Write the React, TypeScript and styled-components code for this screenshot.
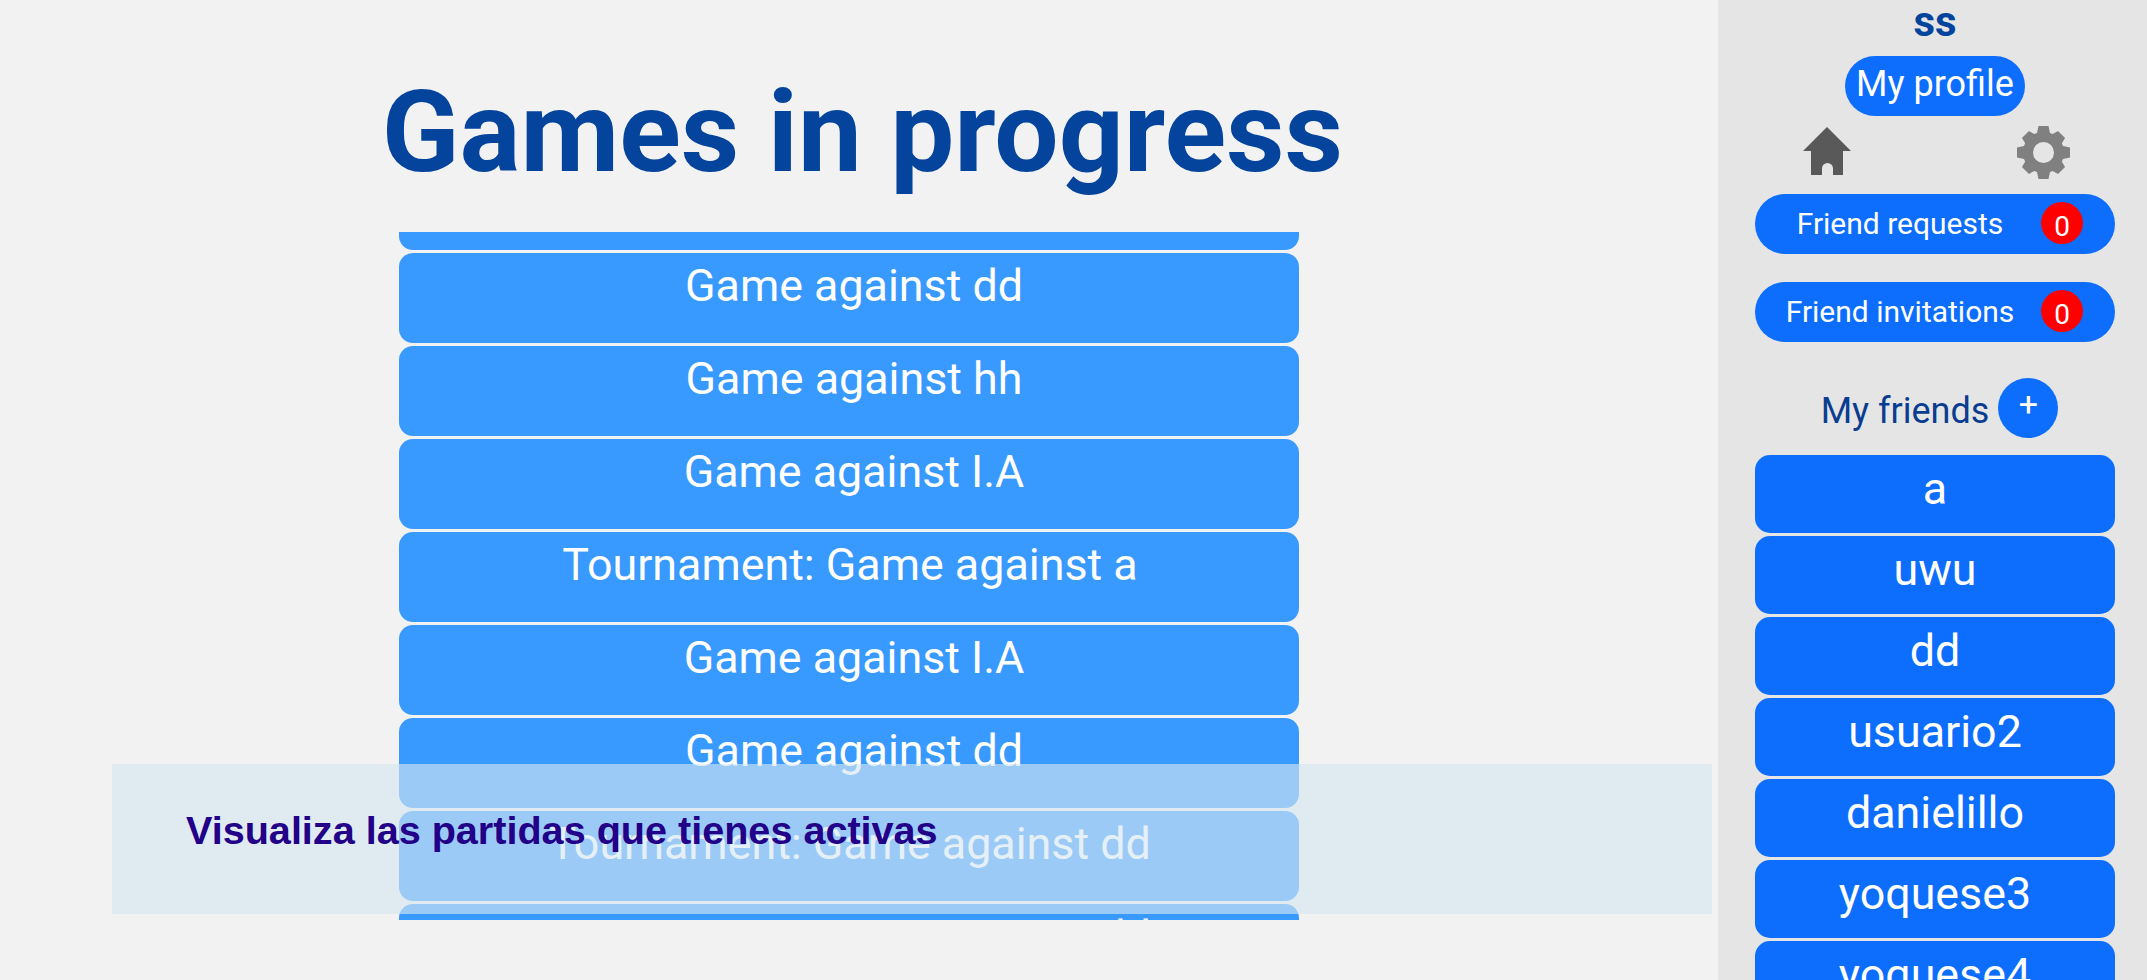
import React from "react";
import styled, { createGlobalStyle } from "styled-components";

const GlobalStyle = createGlobalStyle`
  html, body {
    margin: 0;
    padding: 0;
    height: 100%;
    overflow: hidden;
    background: #f2f2f2;
    font-family: Roboto, sans-serif;
  }
  * {
    box-sizing: border-box;
  }
`;

const Page = styled.div`
  display: grid;
  grid-template-columns: 1718px 429px;
  height: 980px;
  overflow: hidden;
`;

const Main = styled.main`
  position: relative;
  display: flex;
  flex-direction: column;
  align-items: center;
  padding-top: 65px;
`;

const Title = styled.h1`
  flex: none;
  margin: 0 0 0 7px;
  height: 167px;
  font-size: 114px;
  line-height: 134px;
  font-weight: 700;
  color: #04449c;
`;

const GameScroller = styled.div`
  flex: none;
  align-self: flex-start;
  margin-left: 399px;
  width: 900px;
  height: 688px;
  overflow: hidden;
`;

const GameList = styled.div`
  display: flex;
  flex-direction: column;
  gap: 3px;
  margin-top: -72px;
`;

const GameRow = styled.div<{ $shift: number }>`
  flex: none;
  height: 90px;
  padding-left: ${(p) => p.$shift}px;
  border-radius: 14px;
  background: #3899ff;
  color: #fff;
  font-size: 44.8px;
  line-height: 66px;
  text-align: center;
`;

const HintBanner = styled.div`
  position: absolute;
  left: 112px;
  top: 764px;
  width: 1600px;
  height: 150px;
  padding: 40px 74px;
  background: rgba(214, 231, 240, 0.63);
  color: #220088;
  font-family: "Liberation Sans", Arial, sans-serif;
  font-size: 39.6px;
  font-weight: 700;
  line-height: 52px;
`;

const Sidebar = styled.aside`
  display: flex;
  flex-direction: column;
  align-items: center;
  padding-left: 37px;
  padding-right: 32px;
  height: 980px;
  overflow: hidden;
  background: #e5e5e5;
`;

const UserName = styled.div`
  flex: none;
  height: 56px;
  font-size: 42px;
  font-weight: 700;
  line-height: 44px;
  color: #04449c;
`;

const ProfileButton = styled.button`
  flex: none;
  width: 180px;
  height: 60px;
  padding: 0 0 4px;
  border: 0;
  border-radius: 30px;
  background: #0d6efd;
  color: #fff;
  font-family: inherit;
  font-size: 36px;
  line-height: 54px;
`;

const IconRow = styled.div`
  flex: none;
  display: flex;
  justify-content: space-between;
  align-items: flex-start;
  width: 100%;
  height: 78px;
  padding: 10px 45px 0 48px;

  svg:first-child {
    margin-top: 1px;
  }
`;

const NoticeButton = styled.button`
  flex: none;
  position: relative;
  width: 100%;
  height: 60px;
  margin-bottom: 28px;
  padding: 0;
  border: 0;
  border-radius: 30px;
  background: #0d6efd;
  color: #fff;
  font-family: inherit;
  font-size: 30px;
  line-height: 60px;
`;

const NoticeLabel = styled.span`
  position: absolute;
  left: 145px;
  top: 0;
  transform: translateX(-50%);
  white-space: nowrap;
`;

const Badge = styled.span`
  position: absolute;
  right: 32px;
  top: 8px;
  width: 42px;
  height: 42px;
  border-radius: 50%;
  background: #f00;
  color: #fff;
  font-size: 28px;
  line-height: 50px;
  text-align: center;
`;

const FriendsHeader = styled.div`
  flex: none;
  display: flex;
  align-items: flex-start;
  gap: 9px;
  height: 77px;
  margin-left: 9px;
  margin-top: 8px;
`;

const FriendsTitle = styled.span`
  margin-top: 6px;
  font-size: 36px;
  line-height: 54px;
  color: #0a3d8f;
`;

const AddButton = styled.button`
  width: 60px;
  height: 60px;
  padding: 0 0 8px;
  border: 0;
  border-radius: 50%;
  background: #0d6efd;
  color: #fff;
  font-family: inherit;
  font-size: 34px;
  line-height: 48px;
`;

const FriendList = styled.div`
  flex: none;
  display: flex;
  flex-direction: column;
  gap: 3px;
  width: 100%;
`;

const FriendButton = styled.button`
  flex: none;
  height: 78px;
  padding: 0 0 11px;
  border: 0;
  border-radius: 15px;
  background: #0d6efd;
  color: #fff;
  font-family: inherit;
  font-size: 44.8px;
  line-height: 60px;
`;

const games = [
  { label: "", shift: 0 },
  { label: "Game against dd", shift: 10 },
  { label: "Game against hh", shift: 10 },
  { label: "Game against I.A", shift: 10 },
  { label: "Tournament: Game against a", shift: 2 },
  { label: "Game against I.A", shift: 10 },
  { label: "Game against dd", shift: 10 },
  { label: "Tournament: Game against dd", shift: 2 },
  { label: "Tournament: Game against dd", shift: 2 },
];

const friends = ["a", "uwu", "dd", "usuario2", "danielillo", "yoquese3", "yoquese4"];

// 8 flat teeth round a 53px gear
const gearPath = () => {
  const c = 26.5;
  const pts: string[] = [];
  for (let k = 0; k < 8; k++) {
    const a = (k * Math.PI) / 4;
    const outer = k % 2 ? 25.5 : 26.5;
    const corners = [
      [-6.5, 19.5],
      [-5, outer],
      [5, outer],
      [6.5, 19.5],
    ];
    corners.forEach(([x, r]) => {
      const px = c + x * Math.cos(a) + r * Math.sin(a);
      const py = c + x * Math.sin(a) - r * Math.cos(a);
      pts.push(`${px.toFixed(2)} ${py.toFixed(2)}`);
    });
  }
  return `M${pts.join("L")}Z`;
};

const HomeIcon = () => (
  <svg width="48" height="48" viewBox="0 0 48 48" fill="#595959">
    <path d="M24 0 48 24H40V48H30V41.500a5.500 5.500 0 0 0-11 0V48H8V24H0Z" />
  </svg>
);

const GearIcon = () => (
  <svg width="53" height="53" viewBox="0 0 53 53" fill="#808080">
    <path
      fillRule="evenodd"
      d={`${gearPath()}M26.500 16a10.500 10.500 0 1 0 0 21 10.500 10.500 0 0 0 0-21Z`}
    />
  </svg>
);

export default function App() {
  return (
    <>
      <GlobalStyle />
      <Page>
        <Main>
          <Title>Games in progress</Title>
          <GameScroller>
            <GameList>
              {games.map((g, i) => (
                <GameRow key={i} $shift={g.shift}>
                  {g.label}
                </GameRow>
              ))}
            </GameList>
          </GameScroller>
          <HintBanner>Visualiza las partidas que tienes activas</HintBanner>
        </Main>
        <Sidebar>
          <UserName>ss</UserName>
          <ProfileButton>My profile</ProfileButton>
          <IconRow>
            <HomeIcon />
            <GearIcon />
          </IconRow>
          <NoticeButton>
            <NoticeLabel>Friend requests</NoticeLabel>
            <Badge>0</Badge>
          </NoticeButton>
          <NoticeButton>
            <NoticeLabel>Friend invitations</NoticeLabel>
            <Badge>0</Badge>
          </NoticeButton>
          <FriendsHeader>
            <FriendsTitle>My friends</FriendsTitle>
            <AddButton>+</AddButton>
          </FriendsHeader>
          <FriendList>
            {friends.map((f) => (
              <FriendButton key={f}>{f}</FriendButton>
            ))}
          </FriendList>
        </Sidebar>
      </Page>
    </>
  );
}
